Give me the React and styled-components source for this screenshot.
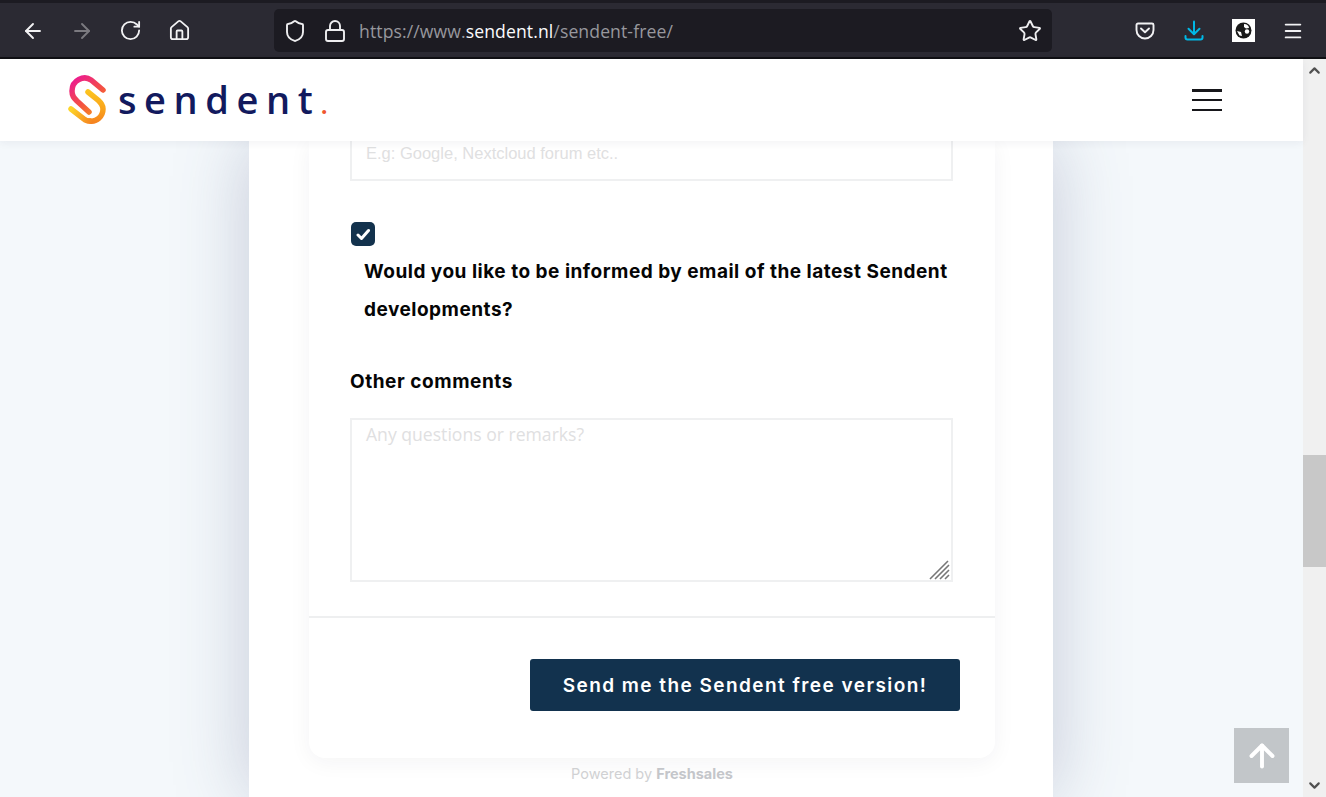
import React from 'react';
import styled, { createGlobalStyle } from 'styled-components';
import { ArrowLeft, ArrowRight, RotateCw, House, Shield, Lock, Star, Menu, ArrowUp, ChevronUp, ChevronDown } from 'lucide-react';

const GlobalStyle = createGlobalStyle`
  html, body {
    margin: 0;
    padding: 0;
    height: 100%;
    overflow: hidden;
    background: #fff;
  }
  * { box-sizing: border-box; }
`;

const Shell = styled.div`
  width: 1326px;
  height: 797px;
  display: flex;
  flex-direction: column;
  overflow: hidden;
  font-family: Inter, "Liberation Sans", sans-serif;
`;

/* browser chrome */
const TabStrip = styled.div`
  height: 3px;
  background: #1c1b22;
  flex: none;
`;
const Toolbar = styled.div`
  height: 56px;
  flex: none;
  display: flex;
  align-items: center;
  background: #2b2a33;
  border-bottom: 2px solid #101014;
  padding-left: 21px;
  padding-top: 1px;
`;
const NavButton = styled.div`
  width: 49px;
  flex: none;
  display: flex;
  align-items: center;
  color: ${(p) => (p.$dim ? '#7b7a80' : '#f2f2f4')};
`;
const UrlBar = styled.div`
  width: 778px;
  height: 43px;
  margin-left: 57px;
  flex: none;
  display: flex;
  align-items: center;
  background: #1c1b22;
  border-radius: 5px;
  padding-left: 9px;
  padding-right: 10px;
  color: #eeeef0;
`;
const UrlIcon = styled.div`
  display: flex;
  width: ${(p) => p.$w}px;
  flex: none;
`;
const UrlText = styled.div`
  flex: 1;
  font-family: "Open Sans", sans-serif;
  font-size: 17.6px;
  letter-spacing: 0.1px;
  color: #97979d;
  white-space: nowrap;
  b {
    font-weight: 400;
    color: #fbfbfe;
  }
`;
const ToolIcons = styled.div`
  display: flex;
  align-items: center;
  margin-left: 68px;
`;
const ToolIcon = styled.div`
  width: 49px;
  flex: none;
  display: flex;
  justify-content: center;
  padding-left: ${(p) => p.$nudge || 0}px;
  color: #f2f2f4;
`;
const ExtBadge = styled.div`
  width: 23px;
  height: 23px;
  background: #fff;
  display: flex;
  align-items: center;
  justify-content: center;
`;

/* page */
const Viewport = styled.div`
  flex: 1;
  min-height: 0;
  display: flex;
`;
const Page = styled.div`
  flex: 1;
  min-width: 0;
  position: relative;
  display: flex;
  flex-direction: column;
  background: #f4f8fb;
`;
const SiteHeader = styled.header`
  height: 82px;
  flex: none;
  position: relative;
  z-index: 2;
  display: flex;
  align-items: center;
  justify-content: space-between;
  background: #fff;
  box-shadow: 0 2px 8px rgba(30, 40, 70, 0.06);
  padding: 0 81px 0 68px;
`;
const Logo = styled.div`
  display: flex;
  align-items: center;
  gap: 12px;
`;
const LogoWord = styled.div`
  font-family: "Open Sans", sans-serif;
  font-size: 38px;
  line-height: 44px;
  font-weight: 600;
  letter-spacing: 7.6px;
  color: #121a5e;
  margin-top: 3px;
  span {
    font-size: 27px;
    color: #f0562e;
  }
`;
const Burger = styled.div`
  width: 30px;
  height: 22px;
  display: flex;
  flex-direction: column;
  justify-content: space-between;
  i {
    display: block;
    height: 2.5px;
    background: #17171b;
  }
`;
const Content = styled.main`
  flex: 1;
  min-height: 0;
  overflow: hidden;
  display: flex;
  flex-direction: column;
  align-items: center;
`;
const Panel = styled.div`
  width: 804px;
  flex: 1;
  margin-left: -1px;
  padding-left: 60px;
  padding-right: 58px;
  background: #fff;
  box-shadow: 0 0 70px rgba(70, 80, 125, 0.27);
`;
const Card = styled.div`
  background: #fff;
  border-radius: 0 0 16px 16px;
  box-shadow: 0 4px 22px rgba(30, 40, 60, 0.05);
`;
const FormBody = styled.div`
  padding: 0 42px 34px 41px;
`;
const TextBox = styled.div`
  border: 2px solid #eff0f1;
  height: ${(p) => p.$h}px;
  padding: ${(p) => p.$pad};
  font-family: "Liberation Sans", sans-serif;
  font-size: 16.5px;
  color: #dfe0e1;
  position: relative;
`;
const TopCutBox = styled(TextBox)`
  border-top: none;
`;
const CommentText = styled.div`
  font-family: "Open Sans", sans-serif;
  font-size: 17.6px;
  color: #dfe0e1;
`;
const Grip = styled.svg`
  position: absolute;
  right: 0;
  bottom: 0;
`;
const CheckBox = styled.div`
  width: 24px;
  height: 24px;
  margin-top: 41px;
  margin-left: 1px;
  border-radius: 5px;
  background: #13324d;
  display: flex;
  align-items: center;
  justify-content: center;
`;
const CheckLabel = styled.div`
  margin-top: 7px;
  padding-left: 14px;
  font-size: 19px;
  line-height: 38px;
  font-weight: 700;
  letter-spacing: 0.5px;
  color: #050505;
`;
const FieldLabel = styled.div`
  margin-top: 41px;
  margin-bottom: 24px;
  font-size: 19px;
  line-height: 24px;
  font-weight: 700;
  letter-spacing: 0.55px;
  color: #050505;
`;
const Actions = styled.div`
  display: flex;
  justify-content: flex-end;
  border-top: 2px solid #eeeff0;
  padding: 41px 35px 47px 0;
`;
const SubmitButton = styled.button`
  width: 430px;
  height: 52px;
  border: none;
  border-radius: 3px;
  background: #12324e;
  color: #fff;
  font-family: Inter, sans-serif;
  font-size: 19px;
  font-weight: 600;
  letter-spacing: 1.45px;
`;
const PoweredBy = styled.div`
  margin-top: 7px;
  text-align: center;
  font-size: 14.5px;
  line-height: 18px;
  color: #d0d1d3;
  b {
    font-weight: 700;
    color: #c4c6ca;
  }
`;
const ToTop = styled.div`
  position: absolute;
  left: 1234px;
  top: 669px;
  width: 55px;
  height: 55px;
  background: #c2c6c9;
  color: #fff;
  display: flex;
  align-items: center;
  justify-content: center;
`;
const Scrollbar = styled.div`
  width: 23px;
  flex: none;
  position: relative;
  background: #f0f0f0;
  color: #505050;
  display: flex;
  flex-direction: column;
  align-items: center;
  justify-content: space-between;
  padding: 3px 0;
`;
const Thumb = styled.div`
  position: absolute;
  left: 0;
  top: 396px;
  width: 23px;
  height: 112px;
  background: #c8c8c8;
`;

function LogoMark() {
  return (
    <svg width="38" height="50" viewBox="68 74 38 50" fill="none">
      <defs>
        <linearGradient id="pinkStroke" gradientUnits="userSpaceOnUse" x1="74" y1="78" x2="100" y2="112">
          <stop offset="0" stopColor="#ec1c8e" />
          <stop offset="0.6" stopColor="#f4543f" />
          <stop offset="1" stopColor="#f7931e" />
        </linearGradient>
        <linearGradient id="orangeStroke" gradientUnits="userSpaceOnUse" x1="88" y1="90" x2="88" y2="122">
          <stop offset="0" stopColor="#fcc41f" />
          <stop offset="0.6" stopColor="#f9a11b" />
          <stop offset="1" stopColor="#f58220" />
        </linearGradient>
        <linearGradient id="yellowTail" gradientUnits="userSpaceOnUse" x1="71" y1="108" x2="92" y2="122">
          <stop offset="0" stopColor="#fdd428" />
          <stop offset="1" stopColor="#f58220" />
        </linearGradient>
      </defs>
      <path d="M103 89 L91 79 C84 74 72 79 72 90 C72 95 74 97 77 100 L89 111" stroke="url(#pinkStroke)" strokeWidth="5.5" strokeLinecap="round" />
      <path d="M88 91 L98 99 C101 102 103 104 103 108 C103 116 96 121 90 120" stroke="url(#orangeStroke)" strokeWidth="5.5" strokeLinecap="round" />
      <path d="M71 108 L84 118 C86 120 88 120 90 120" stroke="url(#yellowTail)" strokeWidth="5.5" strokeLinecap="round" />
    </svg>
  );
}

function PocketIcon() {
  return (
    <svg width="20" height="20" viewBox="0 0 20 20" fill="none" stroke="#f2f2f4" strokeWidth="1.9" strokeLinecap="round" strokeLinejoin="round">
      <path d="M3 2.5 H17 A1.5 1.5 0 0 1 18.5 4 V9 A8.5 8.5 0 0 1 1.5 9 V4 A1.5 1.5 0 0 1 3 2.5 Z" />
      <path d="M6 7.5 L10 11.3 L14 7.5" />
    </svg>
  );
}

function DownloadIcon() {
  return (
    <svg width="20" height="22" viewBox="0 0 20 22" fill="none" stroke="#00b8e6" strokeWidth="2" strokeLinecap="round" strokeLinejoin="round">
      <path d="M10 1.5 V14" />
      <path d="M4.5 8.8 L10 14.2 L15.5 8.8" />
      <path d="M1.5 16 V17.5 A2 2 0 0 0 3.5 19.5 H16.5 A2 2 0 0 0 18.5 17.5 V16" />
    </svg>
  );
}

function GlobeIcon() {
  return (
    <svg width="17" height="17" viewBox="0 0 17 17">
      <circle cx="8.5" cy="8.5" r="8" fill="#1a1a1a" />
      <path d="M9 2 C12 2 14 4 14 6 L11 6.5 L9 5 Z" fill="#fff" />
      <path d="M2 9 L6 10 L7 14 L4.5 13.5 Z" fill="#fff" />
      <circle cx="12" cy="9.5" r="2.2" fill="#fff" />
    </svg>
  );
}

export default function App() {
  return (
    <Shell>
      <GlobalStyle />
      <TabStrip />
      <Toolbar>
        <NavButton><ArrowLeft size={24} strokeWidth={1.9} /></NavButton>
        <NavButton $dim><ArrowRight size={24} strokeWidth={1.9} /></NavButton>
        <NavButton><RotateCw size={23} strokeWidth={1.9} /></NavButton>
        <NavButton><House size={23} strokeWidth={1.9} /></NavButton>
        <UrlBar>
          <UrlIcon $w={40}><Shield size={24} strokeWidth={1.9} /></UrlIcon>
          <UrlIcon $w={36}><Lock size={24} strokeWidth={1.9} /></UrlIcon>
          <UrlText>https://www.<b>sendent.nl</b>/sendent-free/</UrlText>
          <Star size={24} strokeWidth={1.9} />
        </UrlBar>
        <ToolIcons>
          <ToolIcon><PocketIcon /></ToolIcon>
          <ToolIcon><DownloadIcon /></ToolIcon>
          <ToolIcon $nudge={2}><ExtBadge><GlobeIcon /></ExtBadge></ToolIcon>
          <ToolIcon $nudge={2}><Menu size={22} strokeWidth={2} /></ToolIcon>
        </ToolIcons>
      </Toolbar>
      <Viewport>
        <Page>
          <SiteHeader>
            <Logo>
              <LogoMark />
              <LogoWord>sendent<span>.</span></LogoWord>
            </Logo>
            <Burger><i /><i /><i /></Burger>
          </SiteHeader>
          <Content>
            <Panel>
              <Card>
                <FormBody>
                  <TopCutBox $h={40} $pad="3px 14px">E.g: Google, Nextcloud forum etc..</TopCutBox>
                  <CheckBox>
                    <svg width="15" height="13" viewBox="0 0 15 13" fill="none" stroke="#fff" strokeWidth="3" strokeLinecap="round" strokeLinejoin="round">
                      <path d="M2 7 L5.5 10.5 L12.5 2.5" />
                    </svg>
                  </CheckBox>
                  <CheckLabel>Would you like to be informed by email of the latest Sendent developments?</CheckLabel>
                  <FieldLabel>Other comments</FieldLabel>
                  <TextBox $h={164} $pad="2px 14px">
                    <CommentText>Any questions or remarks?</CommentText>
                    <Grip width="22" height="20" viewBox="0 0 22 20" stroke="#777" strokeWidth="1.6">
                      <path d="M1 19 L19 1 M6 19 L20 5 M11 19 L20 10 M16 19 L20 15" />
                    </Grip>
                  </TextBox>
                </FormBody>
                <Actions>
                  <SubmitButton>Send me the Sendent free version!</SubmitButton>
                </Actions>
              </Card>
              <PoweredBy>Powered by <b>Freshsales</b></PoweredBy>
            </Panel>
          </Content>
          <ToTop><ArrowUp size={36} strokeWidth={2.6} /></ToTop>
        </Page>
        <Scrollbar>
          <ChevronUp size={17} strokeWidth={3} />
          <Thumb />
          <ChevronDown size={17} strokeWidth={3} />
        </Scrollbar>
      </Viewport>
    </Shell>
  );
}
